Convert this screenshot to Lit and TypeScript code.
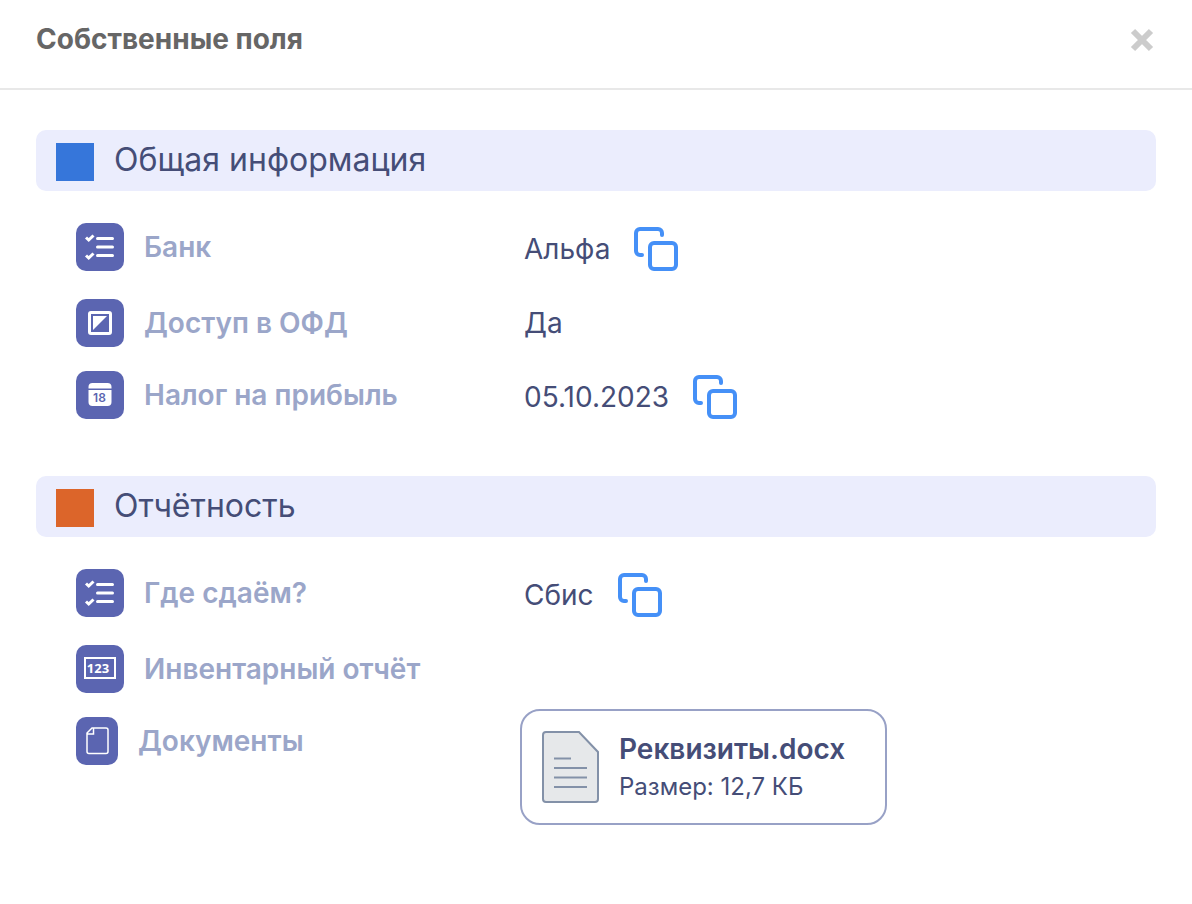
import { LitElement, html, css, svg, nothing, TemplateResult } from "lit";
import { customElement, property } from "lit/decorators.js";

type Kind = "list" | "flag" | "date" | "number" | "file";

interface FileInfo {
  name: string;
  size: string;
}

interface Field {
  kind: Kind;
  label: string;
  value?: string;
  copy?: boolean;
  file?: FileInfo;
}

interface Group {
  title: string;
  tone: "blue" | "orange";
  fields: Field[];
}

const GROUPS: Group[] = [
  {
    title: "Общая информация",
    tone: "blue",
    fields: [
      { kind: "list", label: "Банк", value: "Альфа", copy: true },
      { kind: "flag", label: "Доступ в ОФД", value: "Да" },
      { kind: "date", label: "Налог на прибыль", value: "05.10.2023", copy: true },
    ],
  },
  {
    title: "Отчётность",
    tone: "orange",
    fields: [
      { kind: "list", label: "Где сдаём?", value: "Сбис", copy: true },
      { kind: "number", label: "Инвентарный отчёт" },
      { kind: "file", label: "Документы", file: { name: "Реквизиты.docx", size: "Размер: 12,7 КБ" } },
    ],
  },
];

const GLYPHS: Record<Kind, TemplateResult> = {
  list: svg`
    <path d="M10 14.500l2.700 2.500 4.800-4.500M10 32.500l2.700 2.500 4.800-4.500" fill="none" stroke="#fff" stroke-width="3" />
    <path d="M21.500 15.500h15M21.500 24h15M21.500 32.500h15" stroke="#fff" stroke-width="3" stroke-linecap="round" />`,
  flag: svg`
    <rect x="13.500" y="13.500" width="21" height="21" rx="1.500" fill="none" stroke="#fff" stroke-width="3" />
    <path d="M17 17h14L17 31z" fill="#fff" />`,
  date: svg`
    <path d="M12.500 17.500v-1.500a4 4 0 0 1 4-4h15a4 4 0 0 1 4 4v1.500z" fill="#fff" />
    <path d="M12.500 19h23v12a4 4 0 0 1-4 4h-15a4 4 0 0 1-4-4z" fill="#fff" />
    <text class="num-date" x="23.500" y="30.500" text-anchor="middle">18</text>`,
  number: svg`
    <rect x="9" y="13" width="30" height="20" fill="none" stroke="#fff" stroke-width="2" />
    <text class="num-box" x="22" y="28" text-anchor="middle">123</text>`,
  file: svg`
    <path d="M16 11h14a2 2 0 0 1 2 2v21.500a2 2 0 0 1-2 2h-17a2 2 0 0 1-2-2v-18.500zM17.500 11v6h-6" fill="none" stroke="#fff" stroke-width="1.500" />`,
};

@customElement("field-icon")
class FieldIcon extends LitElement {
  @property() kind: Kind = "list";

  static styles = css`
    :host {
      display: block;
      flex: none;
    }
    .tile {
      display: block;
      border-radius: 10px;
      background: #5b65b1;
    }
    .num-date {
      font: 600 12px Inter, sans-serif;
      fill: #5b65b1;
    }
    .num-box {
      font: 700 13px "Noto Sans", sans-serif;
      fill: #fff;
    }
  `;

  render() {
    const width = this.kind === "file" ? 42 : 48;
    return html`<svg class="tile" width=${width} height="48" viewBox="0 0 ${width} 48" aria-hidden="true">
      ${GLYPHS[this.kind]}
    </svg>`;
  }
}

@customElement("app-root")
class AppRoot extends LitElement {
  static styles = css`
    :host {
      display: block;
      min-height: 100vh;
      background: #fff;
      color: #454d77;
      font-family: Inter, sans-serif;
      font-size: 28px;
      line-height: 36px;
    }
    button {
      display: flex;
      align-items: center;
      justify-content: center;
      margin: 0;
      padding: 0;
      border: 0;
      background: none;
      cursor: pointer;
    }
    .top {
      display: flex;
      justify-content: space-between;
      align-items: flex-start;
      padding: 20px 36px 28px;
      border-bottom: 2px solid #e8e8e8;
    }
    .title {
      margin: 0;
      font-size: 28px;
      line-height: 38px;
      font-weight: 700;
      color: #666;
    }
    .close {
      width: 28px;
      height: 40px;
    }
    .body {
      display: flex;
      flex-direction: column;
      gap: 53px;
      padding: 40px 36px;
    }
    .group-head {
      display: flex;
      align-items: flex-start;
      gap: 20px;
      padding: 13px 20px 10px;
      border-radius: 10px;
      background: #ebedfd;
    }
    .swatch {
      flex: none;
      width: 38px;
      height: 38px;
    }
    .blue {
      background: #3676da;
    }
    .orange {
      background: #dc652a;
    }
    .group-title {
      margin: 0;
      font-size: 32px;
      line-height: 34px;
      font-weight: 400;
    }
    .fields {
      display: flex;
      flex-direction: column;
      gap: 24px;
      margin: 0;
      padding: 32px 0 0 40px;
    }
    .field {
      display: grid;
      grid-template-columns: 444px 1fr;
      align-items: start;
      min-height: 48px;
    }
    .label {
      display: flex;
      align-items: center;
      gap: 20px;
      min-height: 48px;
      font-weight: 600;
      color: #9ba6c9;
    }
    .value {
      display: flex;
      align-items: center;
      gap: 22px;
      min-height: 48px;
      margin: 0;
      padding-left: 4px;
    }
    .with-copy .value {
      min-height: 52px;
    }
    .with-file {
      margin-top: -8px;
    }
    .with-file .label {
      padding-top: 8px;
    }
    .with-file .value {
      padding-left: 0;
    }
    .card {
      display: flex;
      align-items: center;
      gap: 20px;
      padding: 18px 40px 18px 20px;
      border: 2px solid #98a1c6;
      border-radius: 20px;
      color: inherit;
      text-decoration: none;
    }
    .card-text {
      display: flex;
      flex-direction: column;
    }
    .file-name {
      font-weight: 600;
      line-height: 40px;
    }
    .file-size {
      font-size: 24px;
      line-height: 36px;
    }
  `;

  private copy(text: string) {
    navigator.clipboard?.writeText(text);
  }

  private renderValue(field: Field) {
    if (field.file) {
      return html`<a class="card" href="#">
        <svg width="57" height="72" viewBox="0 0 57 72" aria-hidden="true">
          <path d="M4 1h33l19 20v47a3 3 0 0 1-3 3H4a3 3 0 0 1-3-3V4a3 3 0 0 1 3-3z" fill="#e6e8ea" stroke="#8391a8" stroke-width="2" />
          <path d="M12 27.500h17M12 37h33M12 46.500h33M12 56h33" stroke="#8391a8" stroke-width="2" />
        </svg>
        <span class="card-text">
          <span class="file-name">${field.file.name}</span>
          <span class="file-size">${field.file.size}</span>
        </span>
      </a>`;
    }
    return html`${field.value ?? nothing}${field.copy
      ? html`<button type="button" aria-label="Копировать" @click=${() => this.copy(field.value ?? "")}>
          <svg width="48" height="48" viewBox="0 0 48 48" fill="none" stroke="#4590f7" stroke-width="4" stroke-linecap="round" aria-hidden="true">
            <rect x="18" y="18" width="26" height="26" rx="4" />
            <path d="M10 30H8a4 4 0 0 1-4-4V8a4 4 0 0 1 4-4h18a4 4 0 0 1 4 4v2" />
          </svg>
        </button>`
      : nothing}`;
  }

  private renderField(field: Field) {
    const mod = field.file ? "with-file" : field.copy ? "with-copy" : "";
    return html`<div class="field ${mod}">
      <dt class="label"><field-icon .kind=${field.kind}></field-icon>${field.label}</dt>
      <dd class="value">${this.renderValue(field)}</dd>
    </div>`;
  }

  render() {
    return html`
      <header class="top">
        <h1 class="title">Собственные поля</h1>
        <button class="close" type="button" aria-label="Закрыть">
          <svg width="28" height="28" viewBox="0 0 28 28" aria-hidden="true">
            <path d="M5 5l18 18M23 5L5 23" stroke="#ccc" stroke-width="6" />
          </svg>
        </button>
      </header>
      <main class="body">
        ${GROUPS.map(
          (group) => html`<section>
            <div class="group-head">
              <span class="swatch ${group.tone}"></span>
              <h2 class="group-title">${group.title}</h2>
            </div>
            <dl class="fields">${group.fields.map((f) => this.renderField(f))}</dl>
          </section>`
        )}
      </main>
    `;
  }
}
